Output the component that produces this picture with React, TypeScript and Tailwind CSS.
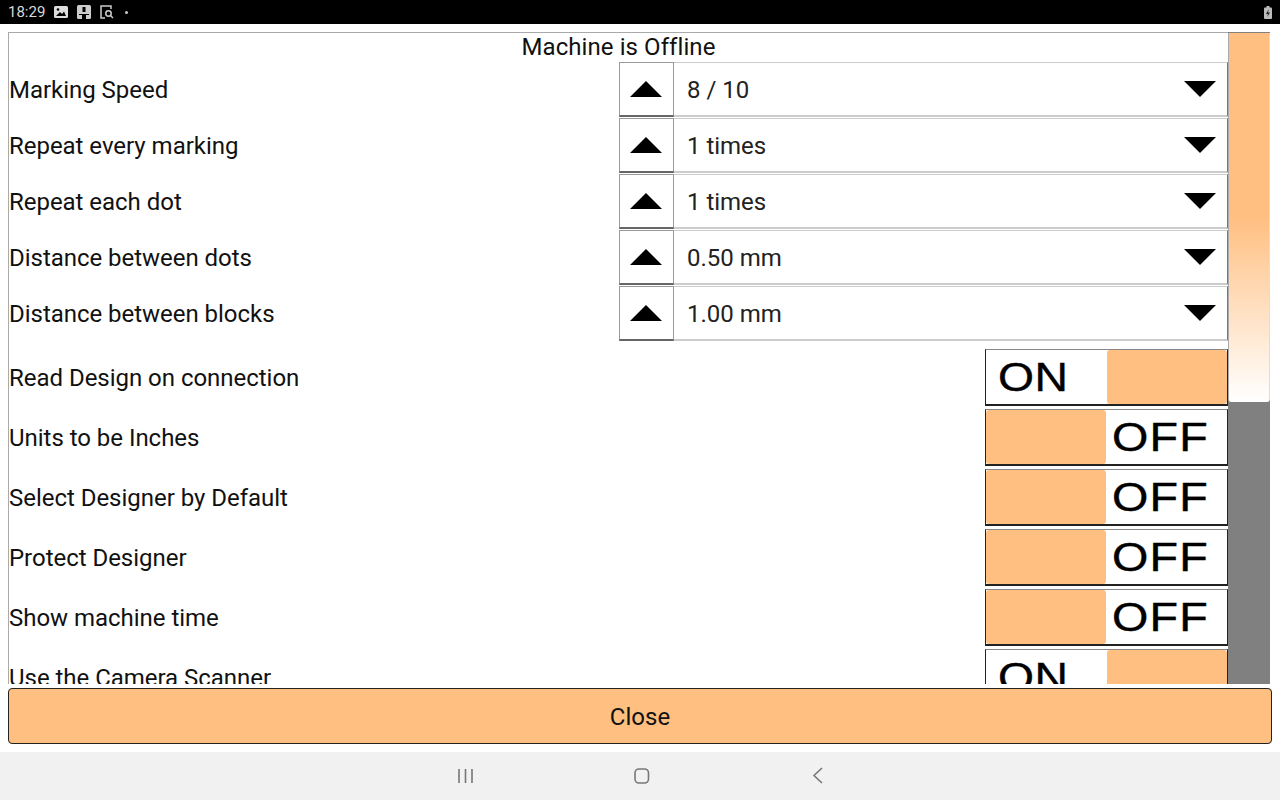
const selects = [
  ["Marking Speed", "8 / 10"],
  ["Repeat every marking", "1 times"],
  ["Repeat each dot", "1 times"],
  ["Distance between dots", "0.50 mm"],
  ["Distance between blocks", "1.00 mm"],
];
const toggles: [string, boolean][] = [
  ["Read Design on connection", true],
  ["Units to be Inches", false],
  ["Select Designer by Default", false],
  ["Protect Designer", false],
  ["Show machine time", false],
  ["Use the Camera Scanner", true],
];

function Up() {
  return (
    <svg width="32" height="16" viewBox="0 0 32 16" className="block">
      <polygon points="0,16 32,16 16,0" fill="#000" />
    </svg>
  );
}
function Down() {
  return (
    <svg width="32" height="16" viewBox="0 0 32 16" className="block">
      <polygon points="0,0 32,0 16,16" fill="#000" />
    </svg>
  );
}

function SelectRow({ label, value }: { label: string; value: string }) {
  return (
    <div className="flex h-[56px] shrink-0 items-center">
      <div className="flex-1 pb-[1px] text-[24px] leading-none tracking-[-0.03px] text-[#111]">{label}</div>
      <div className="flex h-[56px] w-[609px]">
        <div className="flex h-[55px] w-[55px] items-center justify-center border border-b-2 border-[#999] border-b-[#666] pr-[1px]">
          <Up />
        </div>
        <div className="flex h-[55px] flex-1 items-center justify-between border-t border-r border-b-2 border-[#ccc] border-r-[#777] pl-[13px] pr-[11px]">
          <span className="pt-[2px] text-[24px] leading-none tracking-[-0.02px] text-[#222]">{value}</span>
          <Down />
        </div>
      </div>
    </div>
  );
}

function ToggleRow({ label, on }: { label: string; on: boolean }) {
  return (
    <div className="flex h-[60px] shrink-0 items-center">
      <div className="mb-[1px] flex-1 text-[24px] leading-none tracking-[-0.03px] text-[#111]">{label}</div>
      <div className="mb-[1px] flex h-[57px] w-[243px] items-stretch border border-b-2 border-[#222] border-t-[#888]">
        {on ? (
          <>
            <div className="flex w-[121px] items-center">
              <span className="ml-[12px] inline-block origin-left scale-x-[1.13] font-['Liberation_Sans',sans-serif] text-[41px] leading-none tracking-[0.5px] text-black [-webkit-text-stroke:0.4px_#000]">ON</span>
            </div>
            <div className="flex-1 rounded-[3px] bg-[#ffbf80]" />
          </>
        ) : (
          <>
            <div className="w-[120px] rounded-[3px] bg-[#ffbf80]" />
            <div className="flex flex-1 items-center">
              <span className="ml-[6px] inline-block origin-left scale-x-[1.14] font-['Liberation_Sans',sans-serif] text-[41px] leading-none tracking-[1px] text-black [-webkit-text-stroke:0.4px_#000]">OFF</span>
            </div>
          </>
        )}
      </div>
    </div>
  );
}

export default function App() {
  return (
    <div className="flex h-[800px] w-[1280px] flex-col overflow-hidden bg-white font-['Roboto',sans-serif]">
      <div className="flex h-[24px] shrink-0 items-center bg-black pl-[8px] pr-[8px] text-[#d8d8d8]">
        <span className="w-[46px] shrink-0 text-[15px] leading-none">18:29</span>
        <svg width="14" height="12" viewBox="0 0 14 12" className="shrink-0">
          <rect x="0" y="0" width="14" height="12" rx="1.5" fill="#ddd" />
          <circle cx="4" cy="3.5" r="1.3" fill="#000" />
          <path d="M2 10 L6 6 L8 8 L10 5.5 L12 10 Z" fill="#000" />
        </svg>
        <svg width="14" height="14" viewBox="0 0 14 14" className="ml-[9px] shrink-0">
          <rect x="0" y="0" width="14" height="14" rx="1.5" fill="#ccc" />
          <rect x="5.5" y="2" width="3" height="5" fill="#000" />
          <path d="M2 9 L12 9 L12 10 L9 10 L9 14 L5 14 L5 10 L2 10 Z" fill="#000" />
        </svg>
        <svg width="14" height="14" viewBox="0 0 14 14" className="ml-[9px] shrink-0" fill="none" stroke="#ccc" strokeWidth="1.5">
          <path d="M9 1 L1 1 L1 13 L5 13" />
          <path d="M9 1 L11 1 L11 4" />
          <circle cx="8.5" cy="8.5" r="2.7" />
          <path d="M10.5 10.5 L13 13" />
        </svg>
        <span className="ml-[11px] h-[3px] w-[3px] rounded-full bg-[#ccc]" />
        <svg width="8" height="13" viewBox="0 0 8 13" className="ml-auto">
          <rect x="0" y="1.5" width="8" height="11.5" rx="1" fill="#bbb" />
          <rect x="2.5" y="0" width="3" height="2" fill="#bbb" />
          <path d="M4.8 3 L2 8 L4 8 L3.2 11 L6 6.5 L4 6.5 Z" fill="#222" />
        </svg>
      </div>

      <div className="flex h-[660px] shrink-0 pl-[8px] pt-[8px] pr-[10px]">
        <div className="flex h-[652px] w-[1220px] flex-col overflow-hidden border-t border-l border-[#aaa]">
          <div className="h-[29px] shrink-0 pt-[2px] text-center text-[24px] leading-[24px] tracking-[0.08px] text-[#111]">Machine is Offline</div>
          {selects.map(([l, v]) => (
            <SelectRow key={l} label={l} value={v} />
          ))}
          <div className="h-[6px] shrink-0" />
          {toggles.map(([l, o]) => (
            <ToggleRow key={l} label={l} on={o} />
          ))}
        </div>
        <div className="flex h-[652px] w-[42px] flex-col bg-[#808080] pt-[1px]">
          <div className="h-[369px] rounded-b-[3px] border-l border-r border-[#ddd] border-l-[#aaa] bg-gradient-to-b from-[#ffbf80] from-[50%] to-white" />
        </div>
      </div>

      <div className="h-[68px] shrink-0 px-[8px] pt-[4px]">
        <button className="flex h-[56px] w-full items-center justify-center rounded-[4px] border border-[#222] bg-[#ffbf80] pt-[2px] text-[24px] leading-none text-[#111]">Close</button>
      </div>

      <div className="flex flex-1 items-center justify-center bg-[#f1f1f1] text-[#777]">
        <div className="h-[48px] w-[400px]">
          <svg width="400" height="48" viewBox="0 0 400 48" fill="none" stroke="#777" strokeWidth="1.6">
            <path d="M19 17 V31 M25.5 17 V31 M32 17 V31" />
            <rect x="195" y="17" width="13.5" height="14" rx="4" />
            <path d="M382 16 L374 23.5 L382 31" />
          </svg>
        </div>
      </div>
    </div>
  );
}
